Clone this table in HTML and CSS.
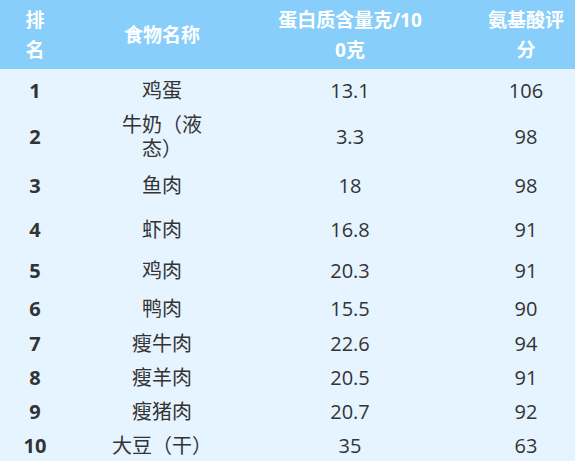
FILE: index.html
```html
<!DOCTYPE html>
<html lang="zh">
<head>
<meta charset="utf-8">
<link rel="stylesheet" href="styles.css">
</head>
<body>
<table class="rank-table">
  <colgroup>
    <col class="c-rank">
    <col class="c-name">
    <col class="c-protein">
    <col class="c-score">
  </colgroup>
  <thead>
    <tr>
      <th class="rank">排名</th>
      <th class="name">食物名称</th>
      <th class="protein">蛋白质含量克/100克</th>
      <th class="score">氨基酸评分</th>
    </tr>
  </thead>
  <tbody>
    <tr><td class="rank">1</td><td class="name">鸡蛋</td><td class="protein">13.1</td><td class="score">106</td></tr>
    <tr><td class="rank">2</td><td class="name">牛奶（液态）</td><td class="protein">3.3</td><td class="score">98</td></tr>
    <tr><td class="rank">3</td><td class="name">鱼肉</td><td class="protein">18</td><td class="score">98</td></tr>
    <tr><td class="rank">4</td><td class="name">虾肉</td><td class="protein">16.8</td><td class="score">91</td></tr>
    <tr><td class="rank">5</td><td class="name">鸡肉</td><td class="protein">20.3</td><td class="score">91</td></tr>
    <tr><td class="rank">6</td><td class="name">鸭肉</td><td class="protein">15.5</td><td class="score">90</td></tr>
    <tr><td class="rank">7</td><td class="name">瘦牛肉</td><td class="protein">22.6</td><td class="score">94</td></tr>
    <tr><td class="rank">8</td><td class="name">瘦羊肉</td><td class="protein">20.5</td><td class="score">91</td></tr>
    <tr><td class="rank">9</td><td class="name">瘦猪肉</td><td class="protein">20.7</td><td class="score">92</td></tr>
    <tr><td class="rank">10</td><td class="name">大豆（干）</td><td class="protein">35</td><td class="score">63</td></tr>
  </tbody>
</table>
</body>
</html>
```
FILE: styles.css
```css
html, body {
  margin: 0;
  padding: 0;
  background: #e6f4ff;
  overflow: hidden;
}

body {
  font-family: "Open Sans", "Noto Sans CJK SC", sans-serif;
  color: #333333;
}

.rank-table {
  width: 575px;
  table-layout: fixed;
  border-collapse: collapse;
  border-spacing: 0;
}

.c-rank { width: 70px; }
.c-name { width: 184px; }
.c-protein { width: 192px; }
.c-score { width: 129px; }

.rank-table th,
.rank-table td {
  padding: 0;
  text-align: center;
  vertical-align: middle;
  word-break: break-all;
}

.rank-table thead tr {
  height: 69px;
  background: #87cefa;
}

.rank-table th {
  color: #ffffff;
  font-size: 19px;
  font-weight: bold;
  line-height: 30px;
}

.rank-table td {
  font-size: 20px;
  line-height: 24px;
}

.rank-table td.rank {
  font-weight: bold;
}

.rank-table .rank { padding: 0 20px; }
.rank-table .name { padding: 0 38px; }
.rank-table .protein { padding: 0 19px; }
.rank-table .score { padding: 0 7px 0 38px; }

.rank-table tbody tr:nth-child(1) { height: 43px; }
.rank-table tbody tr:nth-child(2) { height: 50px; }
.rank-table tbody tr:nth-child(3) { height: 47px; }
.rank-table tbody tr:nth-child(4) { height: 42px; }
.rank-table tbody tr:nth-child(5) { height: 40px; }
.rank-table tbody tr:nth-child(6) { height: 36px; }
.rank-table tbody tr:nth-child(7) { height: 34px; }
.rank-table tbody tr:nth-child(8) { height: 34px; }
.rank-table tbody tr:nth-child(9) { height: 34px; }
.rank-table tbody tr:nth-child(10) { height: 34px; }
```
